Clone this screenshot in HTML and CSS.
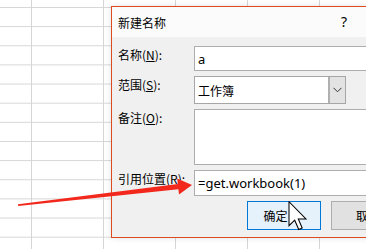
FILE: index.html
```html
<!DOCTYPE html>
<html lang="zh-CN">
<head>
<meta charset="utf-8">
<title>新建名称</title>
<link rel="stylesheet" href="styles.css">
</head>
<body>
<div class="sheet"></div>
<div class="dialog">
  <div class="titlebar">
    <span class="title">新建名称</span>
    <span class="help">?</span>
  </div>
  <div class="form">
    <label class="lbl">名称(<u>N</u>):</label>
    <div class="field input name"><span class="val latin">a</span></div>

    <label class="lbl">范围(<u>S</u>):</label>
    <div class="field combo">
      <span class="val">工作簿</span>
      <span class="drop"><svg width="9" height="6" viewBox="0 0 9 6"><path d="M0.5 0.8 L4.5 4.8 L8.5 0.8" fill="none" stroke="#333" stroke-width="1"/></svg></span>
    </div>

    <label class="lbl">备注(<u>O</u>):</label>
    <div class="field area"></div>

    <label class="lbl">引用位置(<u>R</u>):</label>
    <div class="field input ref"><span class="val latin">=get.workbook(1)</span></div>

    <div class="buttons">
      <button class="btn ok">确定</button>
      <button class="btn">取消</button>
    </div>
  </div>
</div>
<svg class="arrow" width="366" height="249" viewBox="0 0 366 249">
  <polygon points="18,204.3 177.8,183.9 177.2,178.5 192,185 179,194.6 178.4,189.2 18.2,205.9" fill="#f3281c"/>
</svg>
<svg class="cursor" width="20" height="30" viewBox="0 0 13 20">
  <path d="M0.5 0.5 L0.5 16.5 L4.3 12.8 L7 19 L9.3 18 L6.7 12 L11.8 12 Z" fill="#fff" stroke="#000" stroke-width="0.7" stroke-linejoin="miter"/>
</svg>
</body>
</html>
```
FILE: styles.css
```css
html, body {
  margin: 0;
  padding: 0;
}
body {
  width: 366px;
  height: 249px;
  overflow: hidden;
  position: relative;
  background: #fff;
  font-family: "Noto Sans CJK SC", "Noto Sans", sans-serif;
}
.sheet {
  width: 366px;
  height: 249px;
  background-color: #fff;
  background-image:
    linear-gradient(to right, #d6d6d6 1px, transparent 1px),
    linear-gradient(to bottom, #d6d6d6 1px, transparent 1px);
  background-size: 72px 100%, 100% 19.15px;
  background-position: 31px 0, 0 7px;
}
.dialog {
  position: absolute;
  left: 111px;
  top: 6px;
  width: 300px;
  height: 232px;
  box-sizing: border-box;
  border: 1px solid #dc4a1f;
  background: #f0f0f0;
  box-shadow: 0 0 6px rgba(0,0,0,0.12);
}
.titlebar {
  height: 30px;
  background: #fbfbfb;
  display: flex;
  align-items: center;
  padding-left: 6px;
  font-size: 12px;
  color: #000;
}
.title {
  padding-top: 0px;
}
.help {
  margin-left: 175px;
  font-family: "Noto Sans", sans-serif;
  font-size: 14px;
  padding-bottom: 1px;
}
.form {
  display: grid;
  grid-template-columns: 76px 1fr;
  row-gap: 5px;
  padding-left: 6px;
  padding-top: 9px;
}
.lbl {
  font-size: 12px;
  line-height: 14px;
  padding-top: 2px;
  color: #000;
  white-space: nowrap;
}
.lbl u {
  text-decoration-thickness: 1px;
  text-underline-offset: 1px;
}
.field {
  box-sizing: border-box;
  border: 1px solid #adadad;
  background: #fff;
  display: flex;
  align-items: center;
  padding-left: 3px;
}
.val {
  font-size: 12px;
  color: #000;
}
.latin {
  font-family: "Noto Sans", sans-serif;
  font-size: 13px;
}
.name {
  width: 200px;
  height: 25px;
}
.combo {
  width: 152px;
  height: 28px;
  border-color: #a6a6a6;
  padding-right: 0;
}
.combo .val {
  flex: 1;
  padding-top: 1px;
}
.drop {
  width: 17px;
  height: 26px;
  box-sizing: border-box;
  background: #e3e3e3;
  border-left: 2px solid #b0b0b0;
  display: flex;
  align-items: center;
  justify-content: center;
}
.area {
  width: 200px;
  height: 56px;
}
.ref {
  width: 200px;
  height: 26px;
}
.ref .val {
  padding-bottom: 1px;
}
.buttons {
  grid-column: 2;
  display: flex;
  gap: 10px;
  padding-left: 53px;
}
.btn {
  width: 74px;
  height: 29px;
  box-sizing: border-box;
  border: 1px solid #adadad;
  background: #e1e1e1;
  font-family: "Noto Sans CJK SC", sans-serif;
  font-size: 12px;
  color: #000;
  padding: 0;
  margin: 0;
}
.btn.ok {
  border-color: #0078d7;
  background: #e5f1fb;
  padding-right: 17px;
}
.arrow {
  position: absolute;
  left: 0;
  top: 0;
}
.cursor {
  position: absolute;
  left: 288px;
  top: 201px;
}
```
